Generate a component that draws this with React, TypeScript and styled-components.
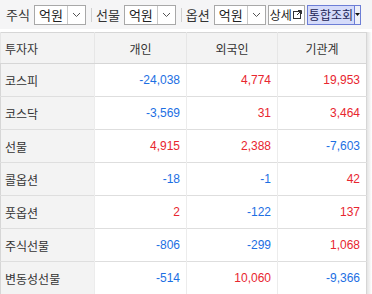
import React from "react";
import styled, { createGlobalStyle } from "styled-components";

const GlobalStyle = createGlobalStyle`
  html, body {
    margin: 0;
    padding: 0;
    background: #ffffff;
  }
  body {
    font-family: "Noto Sans CJK KR", "Noto Sans", sans-serif;
    color: #333333;
  }
`;

type Tone = "up" | "down" | "flat";

interface Row {
  name: string;
  values: number[];
}

const rows: Row[] = [
  { name: "코스피", values: [-24038, 4774, 19953] },
  { name: "코스닥", values: [-3569, 31, 3464] },
  { name: "선물", values: [4915, 2388, -7603] },
  { name: "콜옵션", values: [-18, -1, 42] },
  { name: "풋옵션", values: [2, -122, 137] },
  { name: "주식선물", values: [-806, -299, 1068] },
  { name: "변동성선물", values: [-514, 10060, -9366] },
];

const formatNumber = (n: number) => n.toLocaleString("en-US");

const toneOf = (n: number): Tone => (n > 0 ? "up" : n < 0 ? "down" : "flat");

function Select({ value }: { value: string }) {
  return (
    <SelectBox>
      <span className="value">{value}</span>
      <span className="arrow">
        <svg width="9" height="6" viewBox="0 0 9 6">
          <path d="M1 1 L4.5 4.5 L8 1" fill="none" stroke="#555" strokeWidth="1" />
        </svg>
      </span>
    </SelectBox>
  );
}

function App() {
  return (
    <>
      <GlobalStyle />
      <Wrap>
        <Toolbar>
          <Label>주식</Label>
          <Select value="억원" />
          <Divider />
          <Label>선물</Label>
          <Select value="억원" />
          <Divider />
          <Label>옵션</Label>
          <Select value="억원" />
          <DetailButton>
            상세
            <svg width="9" height="9" viewBox="0 0 9 9">
              <rect x="0.5" y="1.5" width="7" height="7" fill="none" stroke="#333" />
              <path d="M4 5 L8 1 M5 0.5 H8.5 V4" fill="none" stroke="#333" />
            </svg>
          </DetailButton>
          <ComboButton>
            <span className="label">통합조회</span>
            <span className="drop">
              <svg width="5" height="3" viewBox="0 0 5 3">
                <path d="M0 0 H5 L2.5 3 Z" fill="#111" />
              </svg>
            </span>
          </ComboButton>
        </Toolbar>
        <TableWrap>
          <Table>
            <colgroup>
              <col style={{ width: 94 }} />
              <col style={{ width: 92 }} />
              <col style={{ width: 91 }} />
              <col style={{ width: 89 }} />
            </colgroup>
            <thead>
              <tr>
                <HeadCell $align="left">투자자</HeadCell>
                <HeadCell>개인</HeadCell>
                <HeadCell>외국인</HeadCell>
                <HeadCell>기관계</HeadCell>
              </tr>
            </thead>
            <tbody>
              {rows.map((row) => (
                <tr key={row.name}>
                  <NameCell>{row.name}</NameCell>
                  {row.values.map((v, i) => (
                    <NumCell key={i} $tone={toneOf(v)}>
                      {formatNumber(v)}
                    </NumCell>
                  ))}
                </tr>
              ))}
            </tbody>
          </Table>
          <Shade />
        </TableWrap>
      </Wrap>
    </>
  );
}

const Wrap = styled.div`
  width: 372px;
  height: 294px;
  overflow: hidden;
  background: #fff;
`;

const Toolbar = styled.div`
  height: 29px;
  background: #f5f5f6;
  display: flex;
  align-items: center;
  padding: 0 0 0 6px;
  box-sizing: border-box;
  font-size: 13px;
`;

const Label = styled.span`
  color: #333;
  margin-right: 4px;
  line-height: 1;
`;

const SelectBox = styled.div`
  display: flex;
  height: 20px;
  width: 52px;
  box-sizing: border-box;
  border: 1px solid #a8a8a8;
  background: #fff;
  .value {
    width: 32px;
    display: flex;
    align-items: center;
    justify-content: center;
    font-size: 13px;
    color: #222;
  }
  .arrow {
    flex: 1;
    border-left: 1px solid #c8c8c8;
    display: flex;
    align-items: center;
    justify-content: center;
  }
`;

const Divider = styled.span`
  width: 1px;
  height: 14px;
  background: #d0d0d0;
  margin: 0 4px 0 5px;
`;

const DetailButton = styled.div`
  display: flex;
  align-items: center;
  gap: 1px;
  height: 20px;
  box-sizing: border-box;
  margin-left: 2px;
  padding: 0 2px 0 1px;
  border: 1px solid #a8a8a8;
  background: #fff;
  font-size: 12px;
  color: #222;
`;

const ComboButton = styled.div`
  display: flex;
  height: 20px;
  margin-left: 2px;
  box-sizing: border-box;
  border: 1px solid #6d7ed6;
  background: #d5dbfa;
  .label {
    display: flex;
    align-items: center;
    padding: 0 1px;
    font-size: 12px;
    color: #1c2456;
  }
  .drop {
    width: 5px;
    border-left: 1px solid #6d7ed6;
    background: #eef0f8;
    display: flex;
    align-items: center;
    justify-content: center;
  }
`;

const TableWrap = styled.div`
  margin-top: 3px;
  position: relative;
  width: 372px;
`;

const Shade = styled.div`
  position: absolute;
  top: 0;
  right: 0;
  width: 5px;
  height: 100%;
  background: linear-gradient(to right, #e4e4e4, #ffffff);
`;

const Table = styled.table`
  width: 367px;
  table-layout: fixed;
  border-collapse: collapse;
  border: 1px solid #d6d6d6;
  font-size: 12px;
`;

const HeadCell = styled.th<{ $align?: "left" | "center" }>`
  height: 30px;
  padding: 0 4px;
  font-weight: normal;
  color: #333;
  background: #f3f3f3;
  text-align: ${({ $align }) => $align ?? "center"};
  border-bottom: 1px solid #d6d6d6;
  border-left: 1px solid #e6e6e6;
`;

const NameCell = styled.td`
  height: 32px;
  padding: 0 4px;
  background: #f3f3f3;
  color: #333;
  border-top: 1px solid #dedede;
`;

const toneColor: Record<Tone, string> = {
  up: "#e8262f",
  down: "#1c6fe3",
  flat: "#333333",
};

const NumCell = styled.td<{ $tone: Tone }>`
  height: 32px;
  padding: 0 6px 0 4px;
  text-align: right;
  font-family: "Liberation Sans", Arial, sans-serif;
  font-size: 12px;
  color: ${({ $tone }) => toneColor[$tone]};
  border-top: 1px solid #dedede;
  border-left: 1px solid #ececec;
`;

export default App;
